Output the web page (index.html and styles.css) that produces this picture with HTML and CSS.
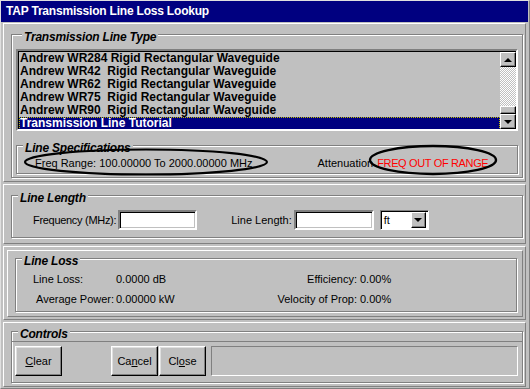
FILE: index.html
```html
<!DOCTYPE html>
<html lang="en">
<head>
    <meta charset="UTF-8">
    <title>TAP Transmission Line Loss Lookup</title>
    <link rel="stylesheet" href="styles.css">
</head>
<body>
    <div class="window">
        <div class="titlebar">TAP Transmission Line Loss Lookup</div>
        <div class="client">

            <div class="panel panel-type">
                <div class="group group-type">
                    <div class="group-label">Transmission Line Type</div>
                    <div class="listbox">
                        <ul class="items">
                            <li>Andrew WR284 Rigid Rectangular Waveguide</li>
                            <li>Andrew WR42  Rigid Rectangular Waveguide</li>
                            <li>Andrew WR62  Rigid Rectangular Waveguide</li>
                            <li>Andrew WR75  Rigid Rectangular Waveguide</li>
                            <li>Andrew WR90  Rigid Rectangular Waveguide</li>
                            <li class="selected">Transmission Line Tutorial</li>
                        </ul>
                        <div class="scrollbar">
                            <div class="sb-btn"><span class="arrow up"></span></div>
                            <div class="sb-track"></div>
                            <div class="sb-thumb"></div>
                            <div class="sb-btn"><span class="arrow down"></span></div>
                        </div>
                    </div>
                    <div class="group group-spec">
                        <div class="group-label">Line Specifications</div>
                        <div class="spec-row">
                            <span class="freq">Freq Range: 100.00000 To 2000.00000 MHz</span>
                            <span class="atten">Attenuation<span class="red">FREQ OUT OF RANGE</span></span>
                        </div>
                        <!-- hand drawn marks over the values -->
                        <svg class="marks" width="500" height="32">
                            <ellipse cx="130" cy="17" rx="121" ry="12.5" fill="none" stroke="#000" stroke-width="2.2"/>
                            <ellipse cx="417" cy="15" rx="63" ry="14" fill="none" stroke="#000" stroke-width="2.4"/>
                        </svg>
                    </div>
                </div>
            </div>

            <div class="panel panel-length">
                <div class="group group-length">
                    <div class="group-label">Line Length</div>
                    <div class="length-row">
                        <label class="lbl-freq" for="freq">Frequency (MHz):</label>
                        <input class="field field-freq" type="text" id="freq">
                        <label class="lbl-len" for="len">Line Length:</label>
                        <input class="field field-len" type="text" id="len">
                        <div class="combo">
                            <span class="combo-text">ft</span>
                            <span class="combo-btn"><span class="arrow down"></span></span>
                        </div>
                    </div>
                </div>
            </div>

            <div class="panel panel-loss">
                <div class="panel-inner">
                    <div class="group group-loss">
                        <div class="group-label">Line Loss</div>
                        <div class="loss-grid">
                            <span>Line Loss:</span>
                            <span>0.0000 dB</span>
                            <span class="rlabel">Efficiency:</span>
                            <span>0.00%</span>
                            <span class="indent">Average Power:</span>
                            <span>0.00000 kW</span>
                            <span class="rlabel">Velocity of Prop:</span>
                            <span>0.00%</span>
                        </div>
                    </div>
                </div>
            </div>

            <div class="panel panel-controls">
                <div class="group group-controls">
                    <div class="group-label">Controls</div>
                    <div class="controls-box">
                        <button class="btn btn-clear"><u>C</u>lear</button>
                        <button class="btn btn-cancel">Ca<u>n</u>cel</button>
                        <button class="btn btn-close">Cl<u>o</u>se</button>
                        <div class="status"></div>
                    </div>
                </div>
            </div>

        </div>
    </div>
</body>
</html>
```

FILE: styles.css
```css
* {
    box-sizing: border-box;
}
body {
    margin: 0;
    background-color: #c0c0c0;
    font-family: "Liberation Sans", Arial, sans-serif;
    font-size: 11px;
    color: #000;
}
.window {
    width: 530px;
    height: 389px;
    border-top: 1px solid #dfdfdf;
    border-left: 1px solid #dfdfdf;
    border-right: 1px solid #808080;
    border-bottom: 1px solid #808080;
    overflow: hidden;
}
.titlebar {
    height: 21px;
    margin-right: 1px;
    padding-left: 5px;
    background-color: #000080;
    color: #fff;
    font-weight: bold;
    font-size: 12px;
    line-height: 21px;
    letter-spacing: -0.2px;
}
.client {
    display: flex;
    flex-direction: column;
    gap: 2px;
    padding: 1px 3px 0 2px;
}

/* raised panels and etched group boxes */
.panel {
    border: 1px solid;
    border-color: #fff #808080 #808080 #fff;
    padding: 10px 2px 0 7px;
}
.group {
    border: 1px solid #808080;
    box-shadow: 1px 1px 0 #fff, inset 1px 1px 0 #fff;
}
.group-label {
    width: fit-content;
    margin: -4px 0 0 6px;
    padding: 0 2px;
    background-color: #c0c0c0;
    font-weight: bold;
    font-style: italic;
    font-size: 12px;
    line-height: 13px;
    letter-spacing: -0.2px;
}

/* transmission line type */
.panel-type {
    height: 159px;
}
.group-type {
    height: 144px;
    padding: 0 4px;
}
.listbox {
    display: flex;
    height: 82px;
    margin-top: 5px;
    border: 2px solid;
    border-color: #808080 #fff #fff #808080;
    box-shadow: inset 1px 1px 0 #000;
}
.items {
    flex: 1;
    margin: 0;
    padding: 1px 0 0 1px;
    list-style: none;
    font-weight: bold;
    font-size: 12px;
    line-height: 13px;
    overflow: hidden;
}
.items li {
    height: 13px;
    padding-left: 1px;
    white-space: pre;
}
.items li.selected {
    background-color: #000080;
    color: #fff;
    outline: 1px dotted #c0c000;
    outline-offset: -1px;
}
.scrollbar {
    display: flex;
    flex-direction: column;
    width: 16px;
    padding-top: 1px;
}
.sb-btn, .sb-thumb, .combo-btn {
    border: 1px solid;
    border-color: #fff #000 #000 #fff;
    box-shadow: inset -1px -1px 0 #808080;
    background-color: #c0c0c0;
}
.sb-btn {
    display: flex;
    align-items: center;
    justify-content: center;
    height: 15px;
}
.sb-track {
    flex: 1;
    background: repeating-conic-gradient(#fff 0 25%, #c0c0c0 0 50%) 0 0 / 2px 2px;
}
.sb-thumb {
    height: 8px;
}
.arrow {
    width: 0;
    height: 0;
    border-left: 4px solid transparent;
    border-right: 4px solid transparent;
}
.arrow.up {
    border-bottom: 4px solid #000;
}
.arrow.down {
    border-top: 4px solid #000;
}

.group-spec {
    position: relative;
    height: 29px;
    margin-top: 14px;
}
.spec-row {
    display: flex;
    height: 14px;
    margin-top: 1px;
    line-height: 14px;
    white-space: nowrap;
}
.freq {
    margin-left: 18px;
}
.atten {
    margin-left: 65px;
}
.red {
    color: #f00;
    margin-left: 4px;
    letter-spacing: -0.35px;
}
.marks {
    position: absolute;
    left: -1px;
    top: -1px;
    overflow: visible;
}

/* line length */
.panel-length {
    height: 60px;
    padding-top: 10px;
}
.group-length {
    height: 43px;
}
.length-row {
    display: flex;
    align-items: center;
    height: 20px;
    margin-top: 5px;
    white-space: nowrap;
}
.lbl-freq {
    margin-left: 21px;
    letter-spacing: -0.3px;
}
.field {
    height: 20px;
    border: 2px solid;
    border-color: #808080 #fff #fff #808080;
    box-shadow: inset 1px 1px 0 #000, inset -1px -1px 0 #c0c0c0;
    background-color: #fff;
    font: inherit;
}
.field-freq {
    width: 79px;
    margin-left: 2px;
}
.lbl-len {
    margin-left: 34px;
}
.field-len {
    width: 80px;
    margin-left: 2px;
}
.combo {
    display: flex;
    align-items: center;
    width: 49px;
    height: 20px;
    margin-left: 6px;
    padding: 2px;
    border: 1px solid;
    border-color: #808080 #fff #fff #808080;
    box-shadow: inset 1px 1px 0 #000;
    background-color: #fff;
}
.combo-text {
    flex: 1;
    padding-left: 1px;
}
.combo-btn {
    display: flex;
    align-items: center;
    justify-content: center;
    width: 15px;
    height: 16px;
}

/* line loss */
.panel-loss {
    height: 74px;
    padding: 3px 2px 2px 3px;
}
.panel-inner {
    height: 67px;
    border: 1px solid;
    border-color: #fff #808080 #808080 #fff;
    padding: 7px 5px 0 7px;
}
.group-loss {
    height: 54px;
}
.loss-grid {
    display: grid;
    grid-template-columns: 83px 160px 84px auto;
    row-gap: 6px;
    margin: 4px 0 0 17px;
    line-height: 14px;
    white-space: nowrap;
}
.rlabel {
    text-align: right;
    padding-right: 3px;
}
.indent {
    padding-left: 3px;
}

/* controls */
.panel-controls {
    height: 65px;
    padding-top: 8px;
}
.group-controls {
    height: 52px;
}
.controls-box {
    display: flex;
    align-items: center;
    height: 38px;
    margin: 0 0 0 -1px;
    padding: 0 4px 0 4px;
    border-top: 1px solid #808080;
}
.btn {
    width: 47px;
    height: 30px;
    padding: 0;
    border: 1px solid;
    border-color: #fff #000 #000 #fff;
    box-shadow: inset -1px -1px 0 #808080, inset 1px 1px 0 #dfdfdf;
    background-color: #c0c0c0;
    font: inherit;
    color: #000;
}
.btn-cancel {
    margin-left: 49px;
}
.btn-close {
    margin-left: 1px;
}
.status {
    flex: 1;
    height: 30px;
    margin-left: 5px;
    border: 1px solid;
    border-color: #808080 #fff #fff #808080;
}
```
